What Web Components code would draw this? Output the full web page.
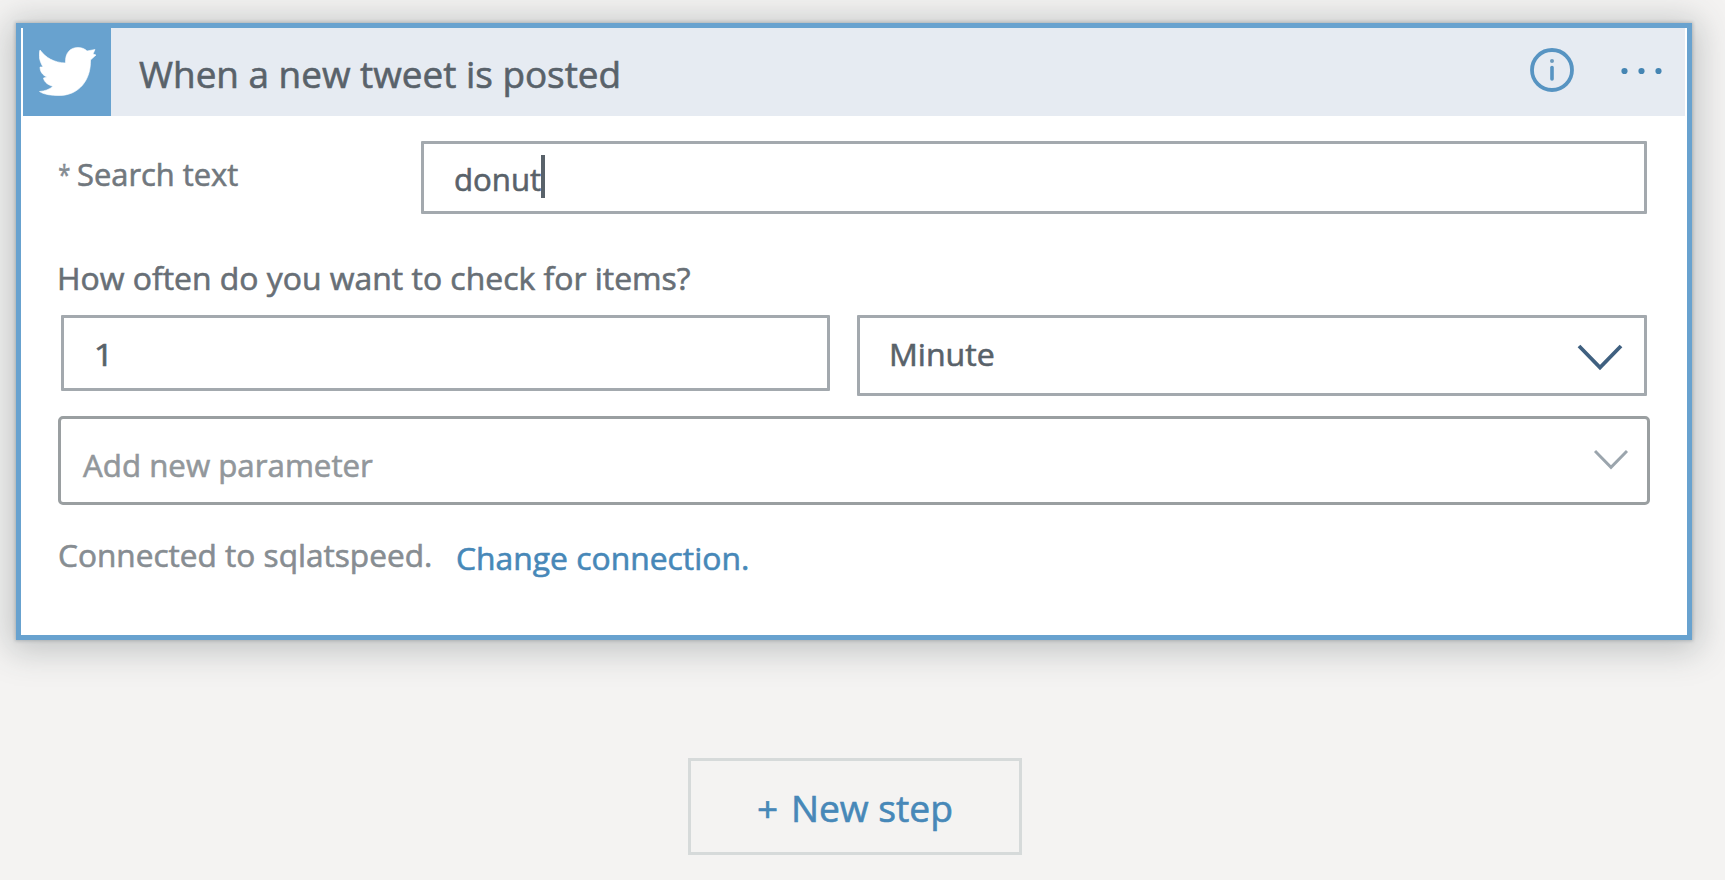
<!DOCTYPE html>
<html lang="en">
<head>
<meta charset="utf-8">
<title>Logic app designer</title>
<style>
html,body{margin:0;height:100%}
body{background:#f4f3f2;font-family:"Open Sans","Noto Sans",sans-serif;overflow:hidden;color:#59626a}
</style>
</head>
<body>
<designer-canvas>
  <trigger-card>
    <card-header slot="header"><fit-text size="36" fit="479">When a new tweet is posted</fit-text></card-header>
    <field-row slot="body">
      <fit-text slot="mark" size="28" fit="11" style="color:#858c92">*</fit-text>
      <fit-text slot="label" size="31.5" fit="160" style="color:#71787e">Search text</fit-text>
      <text-box caret style="--h:73px;--pad:31px;--drop:4px"><fit-text size="31.5" fit="86">donut</fit-text></text-box>
    </field-row>
    <recurrence-row slot="body">
      <fit-text slot="question" size="31.5" fit="630" style="color:#686f76">How often do you want to check for items?</fit-text>
      <text-box slot="count" style="--h:76px;--pad:32px;--drop:2px"><fit-text size="31.5" fit="11">1</fit-text></text-box>
      <drop-down slot="unit" style="--h:81px;--pad:32px;--drop:-3px;--arrow:42px;--end:23px;--lift:3px;--ink:#3f6080"><fit-text size="31.5" fit="102">Minute</fit-text></drop-down>
    </recurrence-row>
    <drop-down slot="body" style="--h:89px;--line:#9a9fa1;--radius:5px;--pad:22px;--drop:9px;--arrow:32px;--end:20px;--lift:-1px;--ink:#9ba5ad;margin:20px 0 0 -3px;width:1592px"><fit-text size="31.5" fit="290" style="color:#92979b">Add new parameter</fit-text></drop-down>
    <connection-line slot="body">
      <fit-text size="31.5" fit="371" style="color:#878d92">Connected to sqlatspeed.</fit-text>
      <fit-text slot="link" size="31.5" fit="290" style="color:#4788b8">Change connection.</fit-text>
    </connection-line>
  </trigger-card>
  <step-button><fit-text slot="plus" size="35" fit="19">+</fit-text><fit-text size="36" fit="158">New step</fit-text></step-button>
</designer-canvas>
<script>
const pen = document.createElement('canvas').getContext('2d');

function define(name, html, setup) {
  const template = document.createElement('template');
  template.innerHTML = html;
  customElements.define(name, class extends HTMLElement {
    connectedCallback() {
      if (this.shadowRoot) return;
      this.attachShadow({mode: 'open'}).append(template.content.cloneNode(true));
      if (setup) setup(this, this.shadowRoot);
    }
  });
}

/* One line of text whose inked width is given by the "fit" attribute. */
define('fit-text', `<style>
  :host{display:block;flex:none;white-space:nowrap;line-height:44px;height:44px;-webkit-text-stroke:.6px currentColor}
  span{display:inline-block;transform-origin:0 50%}
</style><span><slot></slot></span>`, (host, root) => {
  const size = host.getAttribute('size'), fit = +host.getAttribute('fit');
  pen.font = size + 'px "Open Sans","Noto Sans",sans-serif';
  const m = pen.measureText(host.textContent);
  const k = fit / (m.actualBoundingBoxLeft + m.actualBoundingBoxRight);
  host.style.fontSize = size + 'px';
  host.style.width = fit + 'px';
  root.querySelector('span').style.transform =
    `translateX(${m.actualBoundingBoxLeft * k}px) scaleX(${k})`;
});

define('designer-canvas', `<style>
  :host{display:flex;flex-direction:column;box-sizing:border-box;height:880px;padding:23px 0 0 15.5px}
</style><slot></slot>`);

define('trigger-card', `<style>
  :host{display:block;box-sizing:border-box;width:1676px;height:617px;border:5px solid #68a2cf;background:#fff;
    box-shadow:0 0 3px 1px rgba(80,95,110,.3),0 4px 32px 7px rgba(55,65,70,.26)}
  .body{padding:25px 0 0 40.5px}
</style><slot name="header"></slot><div class="body"><slot name="body"></slot></div>`);

define('card-header', `<style>
  :host{display:flex;height:87.5px;margin:0 2px 0 2.5px;background:#e6ebf2}
  .logo{width:88px;background:#68a2cf;display:flex;align-items:center;justify-content:center}
  .title{flex:1;padding:25px 0 0 28px}
  .tools{display:flex;align-items:center;gap:47px;padding:0 23px 4px 0}
  svg{display:block}
</style>
<div class="logo"><svg width="57" height="49" viewBox="0 0 57 49" style="margin:0 0 1px 0"><path fill="#fff" stroke="#fff" stroke-width=".6" stroke-linejoin="round" d="M1 3C7 11 15 15.5 26.5 16C26 6 31 .5 39 .5C43 .5 46 2 48 4L56 2.5L54 7L57 8L51.5 13C52 33 40 48.5 20 48.5C12 48.5 5 47.5 .5 44.5C6 44 10 42.5 14 39.5C9 38 5 35 4.5 31L8 30C3 28 1 24 1 20L4 20C1 15-1 9 1 3Z"/></svg></div>
<div class="title"><slot></slot></div>
<div class="tools">
  <svg width="44" height="44" viewBox="0 0 44 44" fill="none" stroke="#5794c2"><circle cx="22" cy="22" r="20" stroke-width="3.8"/><path d="M22 19.5V31" stroke-width="3.6" stroke-linecap="round"/><circle cx="22" cy="13" r="2" fill="#6d9bbd" stroke="none"/></svg>
  <svg width="41" height="8" viewBox="0 0 41 8" fill="#4585b3" style="margin-top:2px"><circle cx="3.5" cy="4" r="3.1"/><circle cx="20.5" cy="4" r="3.1"/><circle cx="37.5" cy="4" r="3.1"/></svg>
</div>`);

define('field-row', `<style>
  :host{display:flex;align-items:flex-start}
  .label{display:flex;gap:8px;width:362px;margin-left:-2px;padding-top:11px}
  .field{width:1225.5px}
</style>
<div class="label"><slot name="mark"></slot><slot name="label"></slot></div><div class="field"><slot></slot></div>`);

define('text-box', `<style>
  :host{display:flex;align-items:center;box-sizing:border-box;height:var(--h);border:3px solid #a3a9ae;border-radius:1px;padding-left:var(--pad)}
  .value{display:flex;align-items:center;padding-top:var(--drop)}
  i{display:none;width:4px;height:43px;background:#59626a}
  :host([caret]) i{display:block;margin-top:-5px}
</style><div class="value"><slot></slot><i></i></div>`);

define('drop-down', `<style>
  :host{display:flex;align-items:center;justify-content:space-between;box-sizing:border-box;height:var(--h);
    border:3px solid var(--line,#a3a9ae);border-radius:var(--radius,1px);padding:0 var(--end) 0 var(--pad)}
  .value{padding-top:max(0px,var(--drop));margin-top:min(0px,var(--drop))}
  svg{display:block;width:var(--arrow);overflow:visible;margin-top:var(--lift);stroke:var(--ink)}
</style><div class="value"><slot></slot></div>
<svg viewBox="0 0 42 22" fill="none" stroke-width="3.8"><path d="M0 0L21 21.5L42 0"/></svg>`);

define('recurrence-row', `<style>
  :host{display:block;padding-top:42px}
  .question{margin-left:-1px}
  .fields{display:grid;grid-template-columns:769px 789.5px;column-gap:27.5px;align-items:start;margin:15px 0 0 -.5px}
</style>
<div class="question"><slot name="question"></slot></div>
<div class="fields"><slot name="count"></slot><slot name="unit"></slot></div>`);

define('connection-line', `<style>
  :host{display:flex;gap:27px;margin:28px 0 0 -2px}
  .link{padding-top:3px}
</style><slot></slot><div class="link"><slot name="link"></slot></div>`);

define('step-button', `<style>
  :host{display:flex;gap:17px;box-sizing:border-box;width:334px;height:97px;margin:118px 0 0 672.5px;border:3px solid #d6dada;
    padding:26px 0 0 67px;color:#4788b8}
</style><slot name="plus"></slot><slot></slot>`);
</script>
</body>
</html>
